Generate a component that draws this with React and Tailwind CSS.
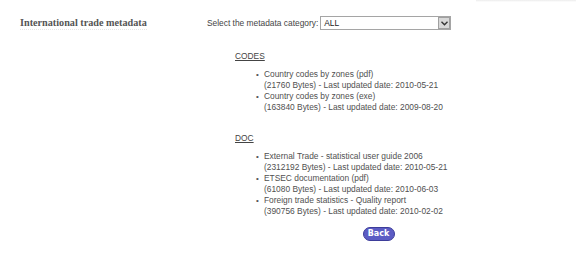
import React from "react";

const sections = [
  {
    title: "CODES",
    items: [
      { name: "Country codes by zones (pdf)", size: "21760", date: "2010-05-21" },
      { name: "Country codes by zones (exe)", size: "163840", date: "2009-08-20" },
    ],
  },
  {
    title: "DOC",
    items: [
      { name: "External Trade - statistical user guide 2006", size: "2312192", date: "2010-05-21" },
      { name: "ETSEC documentation (pdf)", size: "61080", date: "2010-06-03" },
      { name: "Foreign trade statistics - Quality report", size: "390756", date: "2010-02-02" },
    ],
  },
];

const Section = ({ title, items, className }) => (
  <div className={className}>
    <div className="ml-[28px] h-[11px] leading-[11px] text-[#444] underline">{title}</div>
    <ul className="ml-[49px] mt-[7px]">
      {items.map((item, i) => (
        <li key={i} className="flex leading-[11px]">
          <span className="w-[8px] text-[8px] text-[#555]">•</span>
          <div>
            <div className="h-[11px]">{item.name}</div>
            <div className="h-[11px]">
              ({item.size} Bytes) - Last updated date: {item.date}
            </div>
          </div>
        </li>
      ))}
    </ul>
  </div>
);

export default function App() {
  return (
    <div className="relative w-[576px] h-[264px] overflow-hidden bg-white font-['Liberation_Sans',Arial,sans-serif] text-[8.4px] text-[#505050]">
      <div className="absolute top-0 left-[476px] right-0 h-[2px] bg-gradient-to-b from-[#ececec] to-white" />
      <div className="flex pt-[16px]">
        <div className="w-[207px] pl-[20px]">
          <div className="inline-block pt-[1px] pb-[1px] border-b border-dotted border-[#e6e6e6] font-['Liberation_Serif',serif] text-[10.2px] font-bold text-[#555] leading-[11px]">
            International trade metadata
          </div>
        </div>
        <div className="w-[342px]">
          <div className="flex items-center h-[14px]">
            <span className="text-[#444]">Select the metadata category:</span>
            <div className="ml-[2px] flex items-center w-[131px] h-[14px] border border-[#a5a5a5] bg-white">
              <span className="flex-1 pl-[3px] text-[#222] leading-[12px]">ALL</span>
              <div className="flex items-center justify-center w-[12px] h-[12px] bg-[#d8d8d8] border border-[#a0a0a0]">
                <svg width="7" height="5" viewBox="0 0 7 5">
                  <path d="M0.5 0.8 L3.5 3.8 L6.5 0.8" fill="none" stroke="#333" strokeWidth="1.4" />
                </svg>
              </div>
            </div>
          </div>
          <Section title={sections[0].title} items={sections[0].items} className="mt-[21px]" />
          <Section title={sections[1].title} items={sections[1].items} className="mt-[20px]" />
          <div className="flex justify-center mt-[10px]">
            <button className="ml-[1px] h-[14px] w-[32px] rounded-full bg-[#5c5cc4] border border-[#3d3d9a] text-white text-[8px] font-bold leading-[12px] font-['DejaVu_Sans',sans-serif]">
              Back
            </button>
          </div>
        </div>
      </div>
    </div>
  );
}
